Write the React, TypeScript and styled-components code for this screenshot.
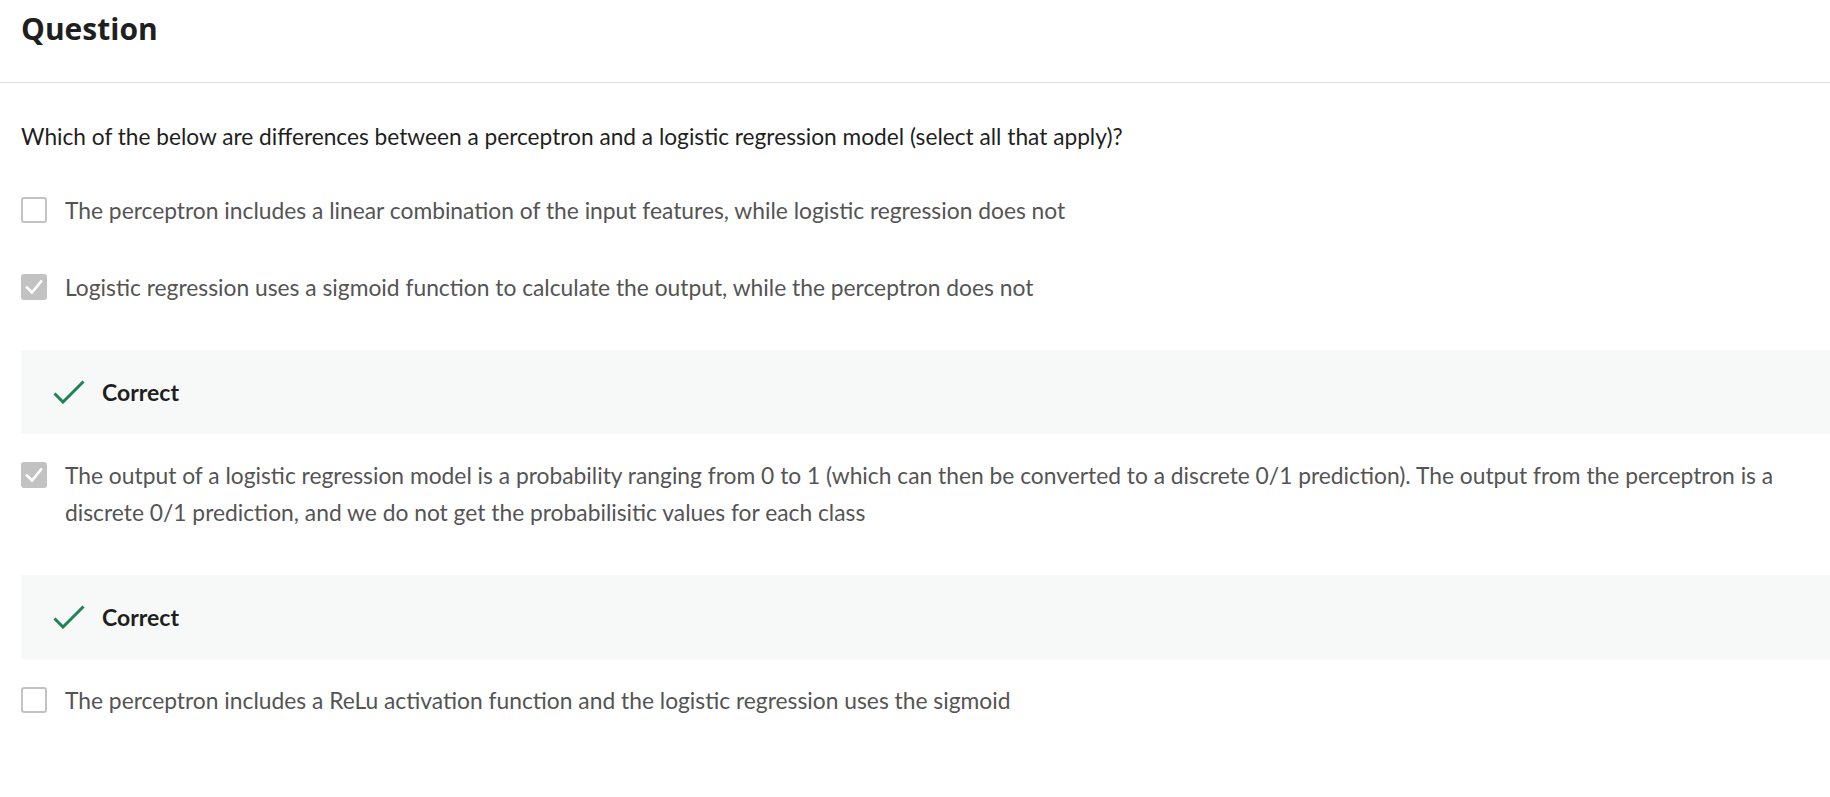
import React from "react";
import styled, { createGlobalStyle } from "styled-components";

const GlobalStyle = createGlobalStyle`
  html, body {
    margin: 0;
    padding: 0;
    background: #ffffff;
  }
  body {
    font-family: Lato, "Liberation Sans", sans-serif;
    overflow: hidden;
  }
`;

const Page = styled.div`
  width: 1830px;
  height: 797px;
  overflow: hidden;
`;

const Header = styled.div`
  height: 83px;
  box-sizing: border-box;
  padding: 9px 0 0 21px;
  border-bottom: 1px solid #e1e1e1;
  h2 {
    margin: 0;
    font-family: "Open Sans", sans-serif;
    font-weight: 700;
    font-size: 30px;
    line-height: 40px;
    color: #1f1f1f;
  }
`;

const Body = styled.div`
  padding: 35px 0 0 21px;
`;

const Prompt = styled.p`
  margin: 0 0 37px;
  font-size: 22.7px;
  line-height: 37px;
  color: #1f1f1f;
`;

const Options = styled.div`
  display: flex;
  flex-direction: column;
`;

const Option = styled.label<{ $gap: number }>`
  display: flex;
  align-items: flex-start;
  gap: 18px;
  margin-bottom: ${(p) => p.$gap}px;
  .text {
    flex: 1;
    font-size: 22.8px;
    line-height: 37px;
    color: #545454;
  }
`;

const Box = styled.span<{ $checked: boolean }>`
  flex: none;
  width: 26px;
  height: 26px;
  margin-top: 5px;
  box-sizing: border-box;
  border-radius: 3px;
  border: 2px solid #c2c2c2;
  background: ${(p) => (p.$checked ? "#c2c2c2" : "#ffffff")};
  display: flex;
  align-items: center;
  justify-content: center;
`;

const Feedback = styled.div`
  height: 84px;
  box-sizing: border-box;
  padding-left: 32px;
  margin-bottom: 23px;
  background: #f6f9f8;
  display: flex;
  align-items: center;
  gap: 17px;
  font-weight: 700;
  font-size: 23px;
  color: #1f1f1f;
`;

const Tick = () => (
  <svg width="20" height="20" viewBox="0 0 20 20" fill="none">
    <path d="M3 10.5 L8 15.5 L17 4.5" stroke="#ffffff" strokeWidth="2.6" strokeLinecap="square" />
  </svg>
);

const CorrectMark = () => (
  <svg width="32" height="24" viewBox="0 0 32 24" fill="none">
    <path d="M1.5 13.5 L10 22 L30.5 1.5" stroke="#1f8354" strokeWidth="3" />
  </svg>
);

interface Choice {
  text: string;
  checked: boolean;
  correct: boolean;
}

const choices: Choice[] = [
  {
    text: "The perceptron includes a linear combination of the input features, while logistic regression does not",
    checked: false,
    correct: false,
  },
  {
    text: "Logistic regression uses a sigmoid function to calculate the output, while the perceptron does not",
    checked: true,
    correct: true,
  },
  {
    text: "The output of a logistic regression model is a probability ranging from 0 to 1 (which can then be converted to a discrete 0/1 prediction).  The output from the perceptron is a discrete 0/1 prediction, and we do not get the probabilisitic values for each class",
    checked: true,
    correct: true,
  },
  {
    text: "The perceptron includes a ReLu activation function and the logistic regression uses the sigmoid",
    checked: false,
    correct: false,
  },
];

export default function App() {
  return (
    <Page>
      <GlobalStyle />
      <Header>
        <h2>Question</h2>
      </Header>
      <Body>
        <Prompt>
          Which of the below are differences between a perceptron and a logistic regression model (select all that apply)?
        </Prompt>
        <Options>
          {choices.map((c, i) => (
            <React.Fragment key={i}>
              <Option $gap={c.correct ? 44 : 40}>
                <Box $checked={c.checked}>{c.checked && <Tick />}</Box>
                <span className="text">{c.text}</span>
              </Option>
              {c.correct && (
                <Feedback>
                  <CorrectMark />
                  <span>Correct</span>
                </Feedback>
              )}
            </React.Fragment>
          ))}
        </Options>
      </Body>
    </Page>
  );
}
